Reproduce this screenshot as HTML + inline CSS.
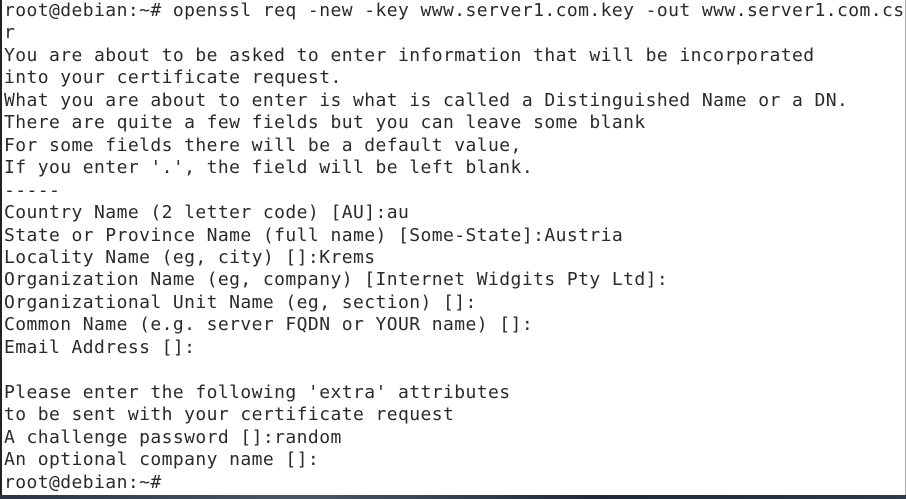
<html><head><style>
body{margin:0;width:906px;height:499px;background:#fff;overflow:hidden;position:relative}
.l{position:absolute;left:0;top:0;width:2px;height:495px;background:#222}
.r{position:absolute;right:0;top:0;width:1px;height:495px;background:#aaa}
.b{position:absolute;left:0;top:495px;width:906px;height:4px;background:linear-gradient(90deg,#2a3444,#4a5668,#1e2838,#2c3a4c)}
pre{position:absolute;left:4px;top:0;margin:0;font-family:"DejaVu Sans Mono","Liberation Mono",monospace;font-size:18px;letter-spacing:0.42px;line-height:22.45px;color:#2a2a2a}
</style></head><body><div class="l"></div><div class="r"></div><div class="b"></div><pre>root@debian:~# openssl req -new -key www.server1.com.key -out www.server1.com.cs
r
You are about to be asked to enter information that will be incorporated
into your certificate request.
What you are about to enter is what is called a Distinguished Name or a DN.
There are quite a few fields but you can leave some blank
For some fields there will be a default value,
If you enter '.', the field will be left blank.
-----
Country Name (2 letter code) [AU]:au
State or Province Name (full name) [Some-State]:Austria
Locality Name (eg, city) []:Krems
Organization Name (eg, company) [Internet Widgits Pty Ltd]:
Organizational Unit Name (eg, section) []:
Common Name (e.g. server FQDN or YOUR name) []:
Email Address []:

Please enter the following 'extra' attributes
to be sent with your certificate request
A challenge password []:random
An optional company name []:
root@debian:~#</pre></body></html>
